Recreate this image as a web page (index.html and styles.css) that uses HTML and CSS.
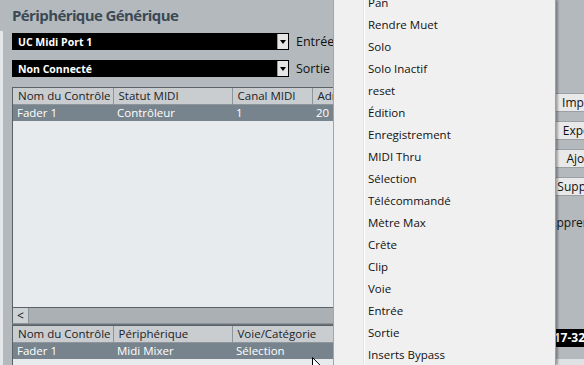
FILE: index.html
```html
<!DOCTYPE html>
<html lang="fr">
<head>
  <meta charset="UTF-8">
  <meta name="viewport" content="width=device-width, initial-scale=1.0">
  <title>Périphérique Générique</title>
  <link rel="stylesheet" href="styles.css">
</head>
<body>
  <div class="window">
    <div class="edge"></div>
    <main class="editor">
      <h1 class="title">Périphérique Générique</h1>

      <div class="port-row">
        <div class="port-select">
          <span>UC Midi Port 1</span>
          <i class="drop-arrow"></i>
        </div>
        <span class="port-label">Entrée MIDI</span>
      </div>
      <div class="port-row">
        <div class="port-select">
          <span>Non Connecté</span>
          <i class="drop-arrow"></i>
        </div>
        <span class="port-label">Sortie MIDI</span>
      </div>

      <div class="grid controls">
        <table>
          <colgroup>
            <col class="c1"><col class="c2"><col class="c3"><col>
          </colgroup>
          <thead>
            <tr><th>Nom du Contrôle</th><th>Statut MIDI</th><th>Canal MIDI</th><th>Adresse</th></tr>
          </thead>
          <tbody>
            <tr class="selected"><td>Fader 1</td><td>Contrôleur</td><td>1</td><td>20</td></tr>
          </tbody>
        </table>
      </div>
      <div class="hscroll">
        <span class="scroll-btn">&lt;</span>
      </div>
      <div class="splitter"></div>

      <div class="grid assign">
        <table>
          <colgroup>
            <col class="c1"><col class="c2"><col class="c3 wide"><col>
          </colgroup>
          <thead>
            <tr><th>Nom du Contrôle</th><th>Périphérique</th><th>Voie/Catégorie</th><th>Valeur/Action</th></tr>
          </thead>
          <tbody>
            <tr class="selected"><td>Fader 1</td><td>Midi Mixer</td><td>Sélection</td><td></td></tr>
          </tbody>
        </table>
      </div>
    </main>

    <aside class="actions">
      <button>Importer</button>
      <button>Exporter</button>
      <button>Ajouter</button>
      <button>Supprimer</button>
      <span class="learn">Apprendre</span>
      <div class="bank"><span>Canaux 17-32</span></div>
      <span class="strip"></span>
    </aside>
  </div>

  <!-- popup list of the Voie/Catégorie cell -->
  <ul class="context-menu">
    <li>Pan</li>
    <li>Rendre Muet</li>
    <li>Solo</li>
    <li>Solo Inactif</li>
    <li>reset</li>
    <li>Édition</li>
    <li>Enregistrement</li>
    <li>MIDI Thru</li>
    <li>Sélection</li>
    <li>Télécommandé</li>
    <li>Mètre Max</li>
    <li>Crête</li>
    <li>Clip</li>
    <li>Voie</li>
    <li>Entrée</li>
    <li>Sortie</li>
    <li>Inserts Bypass</li>
  </ul>

  <svg class="cursor" width="12" height="19" viewBox="0 0 12 19">
    <path d="M0.5 0.5 L0.5 15.5 L4 12 L6.5 17.5 L8.5 16.5 L6 11.2 L11 11.2 Z" fill="#fff" stroke="#000" stroke-width="1"/>
  </svg>
</body>
</html>
```

FILE: styles.css
```css
:root {
  --panel-bg: #b4b9bd;
  --title-color: #3b4955;
  --grid-bg: #e7ebee;
  --grid-head: #c9cdd0;
  --grid-line: #8d959a;
  --grid-border: #5a6268;
  --row-selected: #77848e;
  --menu-bg: #f0f0f0;
}

body {
  margin: 0;
  width: 584px;
  height: 365px;
  overflow: hidden;
  position: relative;
  font-family: 'Open Sans', 'Noto Sans', sans-serif;
  font-size: 11.5px;
  color: #111;
  background-color: var(--panel-bg);
}

.window {
  display: flex;
  height: 100%;
}

.edge {
  width: 3px;
  margin-top: 31px;
  background-color: #e4e7e9;
  flex: none;
}

.editor {
  width: 536px;
  flex: none;
  padding: 5px 0 0 9px;
}

.title {
  margin: 0 0 7px 0;
  font-size: 15px;
  line-height: 21px;
  font-weight: bold;
  color: var(--title-color);
  letter-spacing: -0.6px;
}

.port-row {
  display: flex;
  align-items: center;
  height: 17px;
  margin-bottom: 10px;
}

.port-select {
  width: 277px;
  height: 17px;
  display: flex;
  align-items: center;
  justify-content: space-between;
  background-color: #000;
  color: #fff;
  font-weight: bold;
  font-size: 10.5px;
  box-sizing: border-box;
  padding-left: 6px;
}

.drop-arrow {
  width: 10px;
  height: 15px;
  margin-right: 1px;
  background-color: #e6e6e6;
  border-left: 1px solid #9a9a9a;
  position: relative;
}

.drop-arrow::after {
  content: '';
  position: absolute;
  left: 2px;
  top: 6px;
  border-left: 3px solid transparent;
  border-right: 3px solid transparent;
  border-top: 4px solid #000;
}

.port-label {
  margin-left: 7px;
  font-size: 12.5px;
  white-space: nowrap;
}

.grid {
  background-color: var(--grid-bg);
  border: 1px solid var(--grid-border);
  border-right: none;
  box-sizing: border-box;
}

.grid.controls {
  height: 221px;
}

.grid.assign {
  height: 60px;
}

.grid table {
  width: 100%;
  border-collapse: collapse;
  table-layout: fixed;
}

.grid col.c1 { width: 100px; }
.grid col.c2 { width: 119px; }
.grid col.c3 { width: 80px; }
.grid col.c3.wide { width: 140px; }

.grid th,
.grid td {
  height: 16px;
  padding: 0 0 0 5px;
  text-align: left;
  white-space: nowrap;
  overflow: hidden;
  line-height: 16px;
}

.grid th {
  font-weight: normal;
  background-color: var(--grid-head);
  border-right: 1px solid var(--grid-line);
  border-bottom: 1px solid var(--grid-line);
  color: #1c2226;
}

.grid tr.selected td {
  background-color: var(--row-selected);
  color: #fff;
  padding-left: 4px;
}

.hscroll {
  height: 15px;
  background-color: #aab0b4;
  border-left: 1px solid var(--grid-border);
  border-bottom: 1px solid #8c9398;
  display: flex;
}

.scroll-btn {
  width: 15px;
  background-color: #cdd2d5;
  border-right: 1px solid #8c9398;
  font-size: 12px;
  line-height: 15px;
  text-align: center;
  color: #111;
}

.splitter {
  height: 1px;
  background-color: #6a7277;
}

.actions {
  flex: none;
  width: 80px;
  margin-left: 5px;
  padding-top: 93px;
  display: flex;
  flex-direction: column;
}

.actions button {
  width: 68px;
  height: 19px;
  margin-bottom: 9px;
  padding: 0;
  border: 1px solid #9aa0a4;
  background-color: #e9e9e9;
  font-family: inherit;
  font-size: 12px;
  color: #111;
}

.learn {
  width: 68px;
  margin-left: -8px;
  margin-top: 9px;
  text-align: center;
  font-size: 12px;
}

.bank {
  margin-top: 98px;
  width: 80px;
  height: 18px;
  box-sizing: border-box;
  padding-right: 48px;
  display: flex;
  justify-content: flex-end;
  background-color: #000;
  color: #fff;
  font-weight: bold;
  font-size: 12px;
  line-height: 18px;
  overflow: hidden;
  white-space: nowrap;
}

.bank span {
  flex: none;
}

.strip {
  margin-top: 12px;
  height: 6px;
  background-color: #dfe2e4;
}

.context-menu {
  position: absolute;
  left: 333px;
  top: 0;
  width: 222px;
  height: 365px;
  margin: 0;
  padding: 0;
  list-style: none;
  box-sizing: border-box;
  border-left: 1px solid #a3a6a8;
  background-color: var(--menu-bg);
  background-image: linear-gradient(90deg, transparent 29px, #e2e3e3 29px, #e2e3e3 30px, #fff 30px, #fff 31px, transparent 31px);
  box-shadow: 1px 0 0 #9c9fa1, 3px 0 2px rgba(0, 0, 0, 0.3);
  font-size: 11.5px;
  color: #111;
}

.context-menu li {
  height: 22px;
  line-height: 22px;
  padding-left: 34px;
}

.context-menu li:first-child {
  margin-top: -8px;
}

.cursor {
  position: absolute;
  left: 312px;
  top: 357px;
}
```
